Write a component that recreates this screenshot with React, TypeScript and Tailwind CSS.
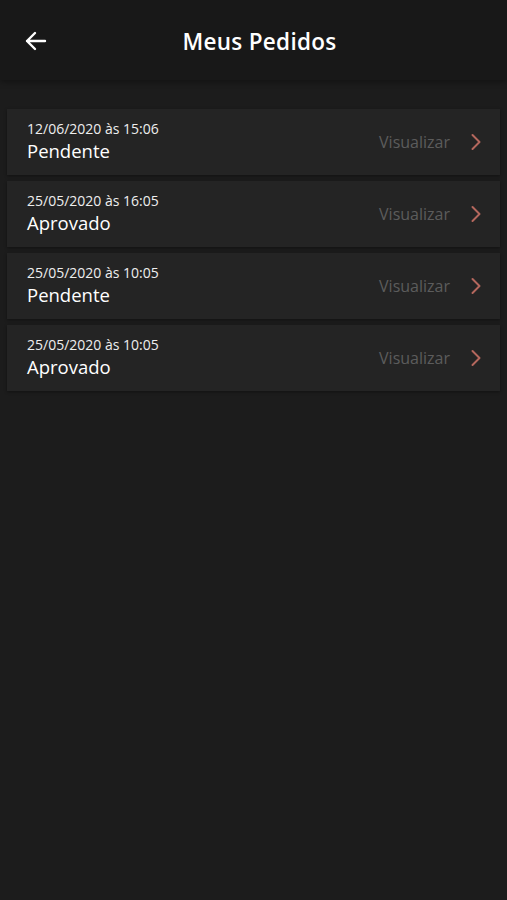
import React from "react";

const orders = [
  { date: "12/06/2020 às 15:06", status: "Pendente" },
  { date: "25/05/2020 às 16:05", status: "Aprovado" },
  { date: "25/05/2020 às 10:05", status: "Pendente" },
  { date: "25/05/2020 às 10:05", status: "Aprovado" },
];

export default function App() {
  return (
    <div
      className="w-[507px] h-[900px] bg-[#1c1c1c] text-white flex flex-col"
      style={{ fontFamily: '"Open Sans", "Noto Sans", sans-serif' }}
    >
      <header className="h-[80px] bg-[#181818] flex items-center relative shadow-[0_2px_6px_rgba(0,0,0,0.35)]">
        <div className="absolute left-[24px] top-[30px]">
          <svg width="23" height="22" viewBox="0 0 23 22" fill="none">
            <path d="M21 11H3M11 3L3 11L11 19" stroke="#ffffff" strokeWidth="2.4" strokeLinecap="round" strokeLinejoin="round" />
          </svg>
        </div>
        <h1 className="w-full text-center text-[22.5px] font-semibold tracking-[0.3px] pt-[3px] pl-[12px]">Meus Pedidos</h1>
      </header>
      <div className="flex flex-col gap-[6px] px-[7px] pt-[29px]">
        {orders.map((o, i) => (
          <div
            key={i}
            className="h-[66px] bg-[#242424] shadow-[0_1px_3px_rgba(0,0,0,0.4)] flex items-center pl-[20px] pr-[18px]"
          >
            <div className="flex flex-col flex-1 pb-[1px]">
              <span className="text-[14px] leading-[18px] text-[#eeeeee]">{o.date}</span>
              <span className="text-[18.5px] leading-[26px] text-white">{o.status}</span>
            </div>
            <span className="text-[16px] text-[#5c5c5c] mr-[20px]">Visualizar</span>
            <svg width="12" height="18" viewBox="0 0 12 18" fill="none">
              <path d="M2.5 2L9.5 9L2.5 16" stroke="#b4675d" strokeWidth="2" strokeLinecap="round" strokeLinejoin="round" />
            </svg>
          </div>
        ))}
      </div>
    </div>
  );
}
